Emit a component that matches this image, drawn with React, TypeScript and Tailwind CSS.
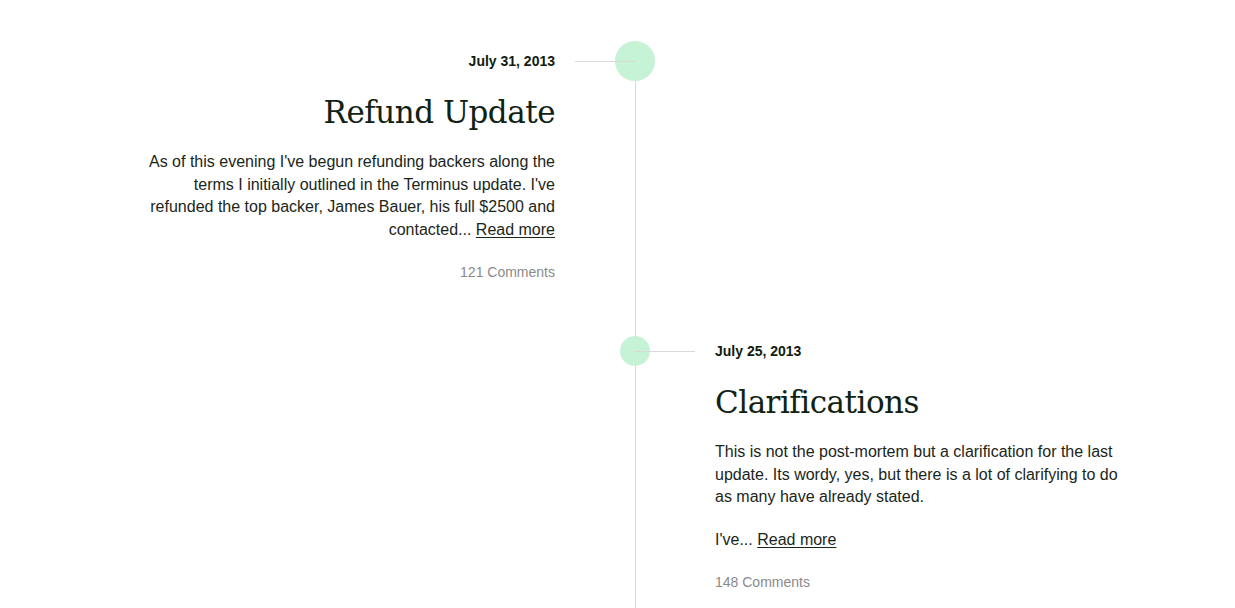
const entries = [
  {
    side: 'left',
    date: 'July 31, 2013',
    title: 'Refund Update',
    paragraphs: [
      "As of this evening I've begun refunding backers along the terms I initially outlined in the Terminus update. I've refunded the top backer, James Bauer, his full $2500 and contacted...",
    ],
    comments: '121 Comments',
    big: true,
  },
  {
    side: 'right',
    date: 'July 25, 2013',
    title: 'Clarifications',
    paragraphs: [
      'This is not the post-mortem but a clarification for the last update. Its wordy, yes, but there is a lot of clarifying to do as many have already stated.',
      "I've...",
    ],
    comments: '148 Comments',
    big: false,
  },
]

type Entry = (typeof entries)[number]

function Post({ entry }: { entry: Entry }) {
  const left = entry.side === 'left'
  return (
    <div className={left ? 'text-right' : 'text-left'}>
      <div className={`flex h-10 items-center text-[14px] font-bold text-[#111c10] ${left ? 'justify-end' : 'justify-start'}`}>
        {entry.date}
      </div>
      <h2 className="mt-[11px] font-['DejaVu_Serif',serif] text-[31px] leading-[40px] tracking-[-0.5px] text-[#112214]">
        {entry.title}
      </h2>
      <div className="mt-[19px] text-[16px] leading-[22.5px] text-[#1b261a]">
        {entry.paragraphs.map((p, i) => (
          <p key={i} className={i > 0 ? 'mt-[20px]' : ''}>
            {p}
            {i === entry.paragraphs.length - 1 && (
              <>
                {' '}
                <a href="#" className="underline underline-offset-2 decoration-1">
                  Read more
                </a>
              </>
            )}
          </p>
        ))}
      </div>
      <div className="mt-[21px] text-[14px] leading-5 text-[#8a8a8a]">{entry.comments}</div>
    </div>
  )
}

function Marker({ big, left }: { big: boolean; left: boolean }) {
  return (
    <div className="relative flex h-10 items-center justify-center">
      <div className={`rounded-full bg-[#c6f2d5] ${big ? 'h-10 w-10' : 'h-[30px] w-[30px]'}`} />
      <div className={`absolute top-5 h-px w-[60px] bg-[#d9d9d9] ${left ? 'left-5' : 'left-20'}`} />
    </div>
  )
}

export default function App() {
  return (
    <div className="min-h-[608px] bg-white font-['Liberation_Sans',Arial,sans-serif]">
      <div className="relative ml-[145px] w-[990px] pt-[41px] pb-10">
        <div className="absolute top-[61px] bottom-0 left-[490px] w-px bg-[#d9d9d9]" />
        {entries.map((entry, i) => {
          const left = entry.side === 'left'
          return (
            <div key={i} className={`grid grid-cols-[410px_160px_420px] ${i > 0 ? 'mt-[49px]' : ''}`}>
              <div>{left && <Post entry={entry} />}</div>
              <div>
                <Marker big={entry.big} left={left} />
              </div>
              <div>{!left && <Post entry={entry} />}</div>
            </div>
          )
        })}
      </div>
    </div>
  )
}
